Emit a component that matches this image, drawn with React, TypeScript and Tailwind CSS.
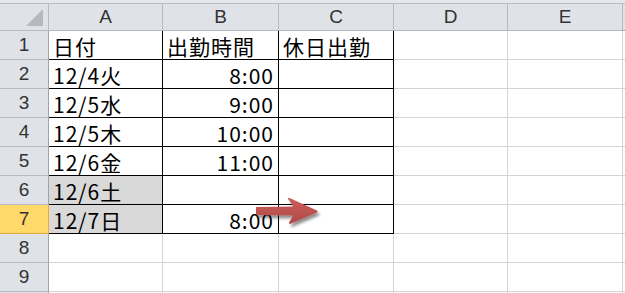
import React from "react";

const cols = [
  { w: 114, label: "A" },
  { w: 116, label: "B" },
  { w: 115, label: "C" },
  { w: 114, label: "D" },
  { w: 115, label: "E" },
];

type Cell = { text?: string; right?: boolean; fill?: boolean };

const data: Cell[][] = [
  [{ text: "日付" }, { text: "出勤時間" }, { text: "休日出勤" }],
  [{ text: "12/4火" }, { text: "8:00", right: true }, {}],
  [{ text: "12/5水" }, { text: "9:00", right: true }, {}],
  [{ text: "12/5木" }, { text: "10:00", right: true }, {}],
  [{ text: "12/6金" }, { text: "11:00", right: true }, {}],
  [{ text: "12/6土", fill: true }, {}, {}],
  [{ text: "12/7日", fill: true }, { text: "8:00", right: true }, {}],
];

const cellFont = { fontFamily: '"Noto Sans CJK JP", "Liberation Sans", sans-serif' };
const headFont = { fontFamily: '"Liberation Sans", Arial, sans-serif' };

export default function App() {
  const rows = Array.from({ length: 9 }, (_, i) => i + 1);
  return (
    <div className="relative w-[625px] h-[293px] overflow-hidden bg-white">
      {/* top strip */}
      <div className="h-[4px] bg-[#e6e8ec] border-b border-[#b6bbc2]" />
      {/* column header */}
      <div className="flex h-[27px]">
        <div className="relative w-[49px] shrink-0 bg-[#dfe3e8] border-r border-[#b6bbc2] border-b border-[#9da3aa]">
          <div className="absolute right-[5px] bottom-[4px] w-0 h-0 border-l-[17px] border-l-transparent border-b-[17px] border-b-[#b5b9be]" />
        </div>
        {cols.map((c) => (
          <div
            key={c.label}
            style={{ width: c.w, ...headFont }}
            className="shrink-0 bg-[#dfe3e8] border-r border-[#b6bbc2] border-b border-[#9da3aa] flex items-center justify-center text-[19px] text-[#333333] pt-[1px]"
          >
            {c.label}
          </div>
        ))}
        <div className="flex-1 bg-[#dfe3e8] border-b border-[#9da3aa]" />
      </div>
      {/* rows */}
      {rows.map((r) => {
        const sel = r === 7;
        const rowData = data[r - 1];
        return (
          <div key={r} className="flex h-[29px]">
            <div
              style={headFont}
              className={
                sel
                  ? "w-[49px] shrink-0 bg-[#ffd96a] border-r border-b border-[#e8a93e] flex items-center justify-center text-[19px] text-[#333333] pt-[1px]"
                  : "w-[49px] shrink-0 bg-[#dfe3e8] border-r border-[#9da3aa] border-b border-b-[#b6bbc2] flex items-center justify-center text-[19px] text-[#333333] pt-[1px]"
              }
            >
              {r}
            </div>
            {cols.map((c, ci) => {
              const cell = rowData && ci < 3 ? rowData[ci] : undefined;
              const inTable = !!rowData && ci < 3;
              return (
                <div
                  key={c.label}
                  style={{ width: c.w, ...cellFont }}
                  className={[
                    "shrink-0 flex items-center text-[21px] tracking-[1px] text-black leading-none pt-[2px]",
                    inTable ? "border-r border-b border-black" : "border-r border-b border-[#d4d4d4]",
                    cell?.fill ? "bg-[#d9d9d9]" : "bg-white",
                    cell?.right ? "justify-end pr-[4px]" : "pl-[4px]",
                  ].join(" ")}
                >
                  {cell?.text}
                </div>
              );
            })}
            <div className="flex-1 border-b border-[#d4d4d4]" />
          </div>
        );
      })}
      <div className="flex h-[4px]">
        <div className="w-[49px] shrink-0 bg-[#dfe3e8] border-r border-[#9da3aa]" />
        {cols.map((c) => (
          <div key={c.label} style={{ width: c.w }} className="shrink-0 border-r border-[#d4d4d4]" />
        ))}
      </div>
      {/* arrow */}
      <svg className="absolute left-[252px] top-[194px]" width="72" height="36" viewBox="0 0 72 36">
        <defs>
          <filter id="sh" x="-20%" y="-30%" width="150%" height="180%">
            <feGaussianBlur in="SourceAlpha" stdDeviation="1.6" />
            <feOffset dx="1.5" dy="2.5" result="o" />
            <feComponentTransfer>
              <feFuncA type="linear" slope="0.45" />
            </feComponentTransfer>
            <feMerge>
              <feMergeNode />
              <feMergeNode in="SourceGraphic" />
            </feMerge>
          </filter>
          <linearGradient id="ag" x1="0" y1="0" x2="0" y2="1">
            <stop offset="0" stopColor="#c9605c" />
            <stop offset="1" stopColor="#b04844" />
          </linearGradient>
        </defs>
        <path
          d="M4 13 L41 12.5 Q39 8 36 5 Q35 3.5 37.5 4 L65 16.5 Q66.5 17.5 65 18.5 L39 29.5 Q36.5 30.5 37 28.5 Q39.5 24.5 41 21.5 L4 21 Z"
          fill="url(#ag)"
          filter="url(#sh)"
        />
      </svg>
    </div>
  );
}
